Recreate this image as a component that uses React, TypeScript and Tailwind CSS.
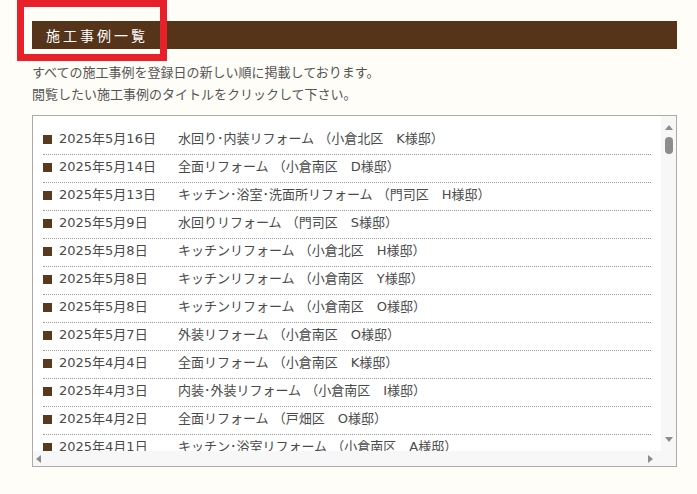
const rows: [string, string][] = [
  ["2025年5月16日", "水回り･内装リフォーム （小倉北区　K様邸）"],
  ["2025年5月14日", "全面リフォーム （小倉南区　D様邸）"],
  ["2025年5月13日", "キッチン･浴室･洗面所リフォーム （門司区　H様邸）"],
  ["2025年5月9日", "水回りリフォーム （門司区　S様邸）"],
  ["2025年5月8日", "キッチンリフォーム （小倉北区　H様邸）"],
  ["2025年5月8日", "キッチンリフォーム （小倉南区　Y様邸）"],
  ["2025年5月8日", "キッチンリフォーム （小倉南区　O様邸）"],
  ["2025年5月7日", "外装リフォーム （小倉南区　O様邸）"],
  ["2025年4月4日", "全面リフォーム （小倉南区　K様邸）"],
  ["2025年4月3日", "内装･外装リフォーム （小倉南区　I様邸）"],
  ["2025年4月2日", "全面リフォーム （戸畑区　O様邸）"],
  ["2025年4月1日", "キッチン･浴室リフォーム （小倉南区　A様邸）"],
]

function Arrow({ dir }: { dir: "up" | "down" | "left" | "right" }) {
  const pts = {
    up: "0,5 4,0 8,5",
    down: "0,0 8,0 4,5",
    left: "5,0 5,8 0,4",
    right: "0,0 0,8 5,4",
  }[dir]
  const vert = dir === "up" || dir === "down"
  return (
    <svg width={vert ? 8 : 5} height={vert ? 5 : 8} viewBox={vert ? "0 0 8 5" : "0 0 5 8"}>
      <polygon points={pts} fill="#8c8c8c" />
    </svg>
  )
}

export default function App() {
  return (
    <div
      className="relative w-[697px] h-[494px] bg-[#fffdf7] pt-[21px] px-[32px] text-[13px] text-[#555]"
      style={{ fontFamily: '"DejaVu Sans", "Noto Sans CJK JP", sans-serif' }}
    >
      <div className="h-[28px] w-[645px] bg-[#56341a] flex items-center pl-[14px]">
        <h2 className="text-white text-[14px] tracking-[3px]" style={{ fontFamily: '"Noto Sans CJK JP", sans-serif' }}>
          施工事例一覧
        </h2>
      </div>

      <p className="mt-[13px] leading-[22px]">
        すべての施工事例を登録日の新しい順に掲載しております。
        <br />
        閲覧したい施工事例のタイトルをクリックして下さい。
      </p>

      <div className="mt-[9px] w-[645px] h-[352px] border border-[#aaa] bg-white flex flex-col">
        <div className="flex flex-1 min-h-0">
          <ul className="flex-1 overflow-hidden pt-[11px] px-[10px]">
            {rows.map(([date, title], i) => (
              <li
                key={i}
                className="flex items-center pt-[4px] pb-[7px] leading-[16px] border-b border-dotted border-[#999] text-[#4a4a4a] whitespace-nowrap"
              >
                <span className="w-[9px] h-[9px] bg-[#5a3a1e] mr-[7px] shrink-0" />
                <span className="w-[119px] shrink-0">{date}</span>
                <span>{title}</span>
              </li>
            ))}
          </ul>
          <div className="w-[15px] bg-[#f7f7f7] flex flex-col items-center pt-[9px] pb-[9px]">
            <Arrow dir="up" />
            <div className="mt-[7px] w-[8px] h-[17px] rounded-full bg-[#8c8c8c]" />
            <div className="flex-1" />
            <Arrow dir="down" />
          </div>
        </div>
        <div className="flex h-[15px]">
          <div className="flex-1 bg-[#f7f7f7] flex items-center justify-between pl-[3px] pr-[8px]">
            <Arrow dir="left" />
            <Arrow dir="right" />
          </div>
          <div className="w-[15px] bg-[#f7f7f7]" />
        </div>
      </div>

      <div className="absolute left-[17px] top-0 w-[150px] h-[61px] border-[7px] border-[#e8202a]" />
    </div>
  )
}
